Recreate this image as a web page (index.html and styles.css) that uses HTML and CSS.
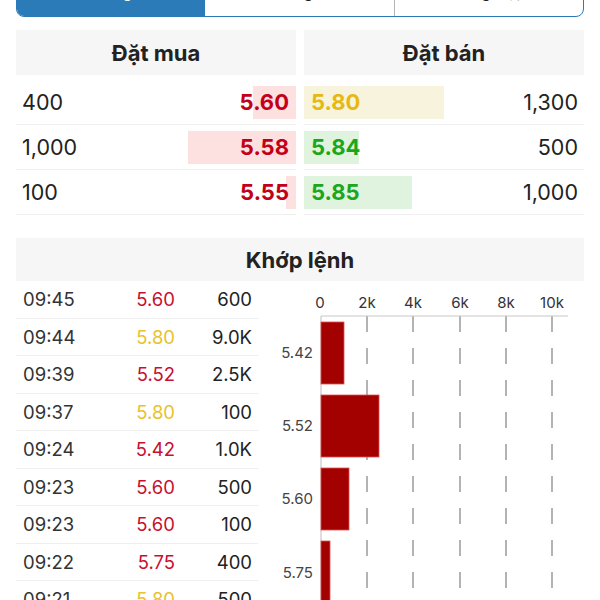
FILE: index.html
```html
<!DOCTYPE html>
<html lang="vi">
<head>
    <meta charset="UTF-8">
    <meta name="viewport" content="width=device-width, initial-scale=1.0">
    <title>Chi tiết mã</title>
    <link rel="stylesheet" href="styles.css">
</head>
<body>
    <div class="page">
        <div class="tabs">
            <div class="tab active">Bước giá</div>
            <div class="tab">Thống kê</div>
            <div class="tab">Tổng hợp</div>
        </div>

        <div class="book">
            <div class="side buy">
                <div class="head">Đặt mua</div>
                <div class="row"><span class="bar" style="width:43px"></span><span class="qty">400</span><span class="price red">5.60</span></div>
                <div class="row"><span class="bar" style="width:108px"></span><span class="qty">1,000</span><span class="price red">5.58</span></div>
                <div class="row"><span class="bar" style="width:10px"></span><span class="qty">100</span><span class="price red">5.55</span></div>
            </div>
            <div class="side sell">
                <div class="head">Đặt bán</div>
                <div class="row"><span class="bar ref" style="width:140px"></span><span class="price yellow">5.80</span><span class="qty">1,300</span></div>
                <div class="row"><span class="bar" style="width:55px"></span><span class="price green">5.84</span><span class="qty">500</span></div>
                <div class="row"><span class="bar" style="width:108px"></span><span class="price green">5.85</span><span class="qty">1,000</span></div>
            </div>
        </div>

        <div class="matched">
            <div class="head">Khớp lệnh</div>
            <div class="matched-body">
                <div class="ticks">
                    <div class="tick"><span>09:45</span><span class="p red">5.60</span><span class="v">600</span></div>
                    <div class="tick"><span>09:44</span><span class="p yellow">5.80</span><span class="v">9.0K</span></div>
                    <div class="tick"><span>09:39</span><span class="p red">5.52</span><span class="v">2.5K</span></div>
                    <div class="tick"><span>09:37</span><span class="p yellow">5.80</span><span class="v">100</span></div>
                    <div class="tick"><span>09:24</span><span class="p red">5.42</span><span class="v">1.0K</span></div>
                    <div class="tick"><span>09:23</span><span class="p red">5.60</span><span class="v">500</span></div>
                    <div class="tick"><span>09:23</span><span class="p red">5.60</span><span class="v">100</span></div>
                    <div class="tick"><span>09:22</span><span class="p red">5.75</span><span class="v">400</span></div>
                    <div class="tick"><span>09:21</span><span class="p yellow">5.80</span><span class="v">500</span></div>
                </div>
                <svg class="chart" width="326" height="340" viewBox="0 0 326 340">
                    <g class="grid">
                        <line x1="109" y1="35" x2="109" y2="340"/>
                        <line x1="155" y1="35" x2="155" y2="340"/>
                        <line x1="202" y1="35" x2="202" y2="340"/>
                        <line x1="248" y1="35" x2="248" y2="340"/>
                        <line x1="294" y1="35" x2="294" y2="340"/>
                    </g>
                    <line class="axis" x1="63" y1="35" x2="310" y2="35"/>
                    <line class="axis" x1="63" y1="35" x2="63" y2="340"/>
                    <g class="xlabels">
                        <text x="62" y="27">0</text>
                        <text x="109" y="27">2k</text>
                        <text x="155" y="27">4k</text>
                        <text x="202" y="27">6k</text>
                        <text x="248" y="27">8k</text>
                        <text x="294" y="27">10k</text>
                    </g>
                    <g class="bars">
                        <rect x="63" y="41" width="23" height="62"/>
                        <rect x="63" y="114" width="58" height="62"/>
                        <rect x="63" y="187" width="28" height="62"/>
                        <rect x="63" y="260" width="9" height="62"/>
                    </g>
                    <g class="ylabels">
                        <text x="55" y="77">5.42</text>
                        <text x="55" y="150">5.52</text>
                        <text x="55" y="223">5.60</text>
                        <text x="55" y="297">5.75</text>
                    </g>
                </svg>
            </div>
        </div>
    </div>
</body>
</html>
```

FILE: styles.css
```css
body {
    margin: 0;
    background: #fff;
    font-family: Inter, 'Noto Sans', 'Liberation Sans', sans-serif;
    color: #222;
    overflow: hidden;
}
.page {
    padding: 0 16px;
}
.tabs {
    display: flex;
    height: 36px;
    margin-top: -19px;
    border: 1.5px solid #2b7bb9;
    border-radius: 8px;
    overflow: hidden;
    box-sizing: border-box;
}
.tab {
    flex: 1;
    text-align: center;
    font-size: 17px;
    line-height: 18px;
    color: #222;
    border-left: 1px solid #b5b5b5;
}
.tab:first-child {
    border-left: none;
}
.tab.active {
    background: #2b7bb9;
    color: #fff;
}
.tab.active + .tab {
    border-left: none;
}

.book {
    display: flex;
    gap: 8px;
    margin-top: 13px;
}
.side {
    flex: 1;
}
.head {
    background: #f6f6f6;
    height: 45px;
    display: flex;
    align-items: center;
    justify-content: center;
    font-size: 22px;
    font-weight: 700;
    color: #222;
}
.side .head {
    margin-bottom: 5px;
}
.row {
    position: relative;
    height: 45px;
    box-sizing: border-box;
    border-bottom: 1px solid #efefef;
    display: flex;
    align-items: center;
    justify-content: space-between;
    font-size: 21.5px;
}
.buy .row {
    padding: 0 7px 0 6px;
}
.sell .row {
    padding: 0 6px 0 7px;
}
.bar {
    position: absolute;
    top: 6px;
    height: 33px;
}
.buy .bar {
    right: 0;
    background: #fde0e0;
}
.sell .bar {
    left: 0;
    background: #dff3df;
}
.sell .bar.ref {
    background: #f8f3dc;
}
.qty, .price {
    position: relative;
}
.qty {
    color: #222;
}
.price {
    font-weight: 700;
    font-size: 22px;
}
.red {
    color: #c20018;
}
.yellow {
    color: #e6b912;
}
.green {
    color: #1aa71a;
}

.matched {
    margin-top: 23px;
}
.matched .head {
    height: 43px;
}
.matched-body {
    display: flex;
}
.ticks {
    width: 242px;
    flex: none;
}
.tick {
    display: grid;
    grid-template-columns: 1fr 70px 77px;
    align-items: center;
    height: 37.5px;
    box-sizing: border-box;
    border-bottom: 1px solid #efefef;
    padding: 0 6px 0 7px;
    font-size: 18.5px;
    color: #333;
}
.tick .p, .tick .v {
    text-align: right;
}
.tick .v {
    color: #222;
}
.tick .p.red {
    color: #c8102e;
}
.tick .p.yellow {
    color: #e8c22e;
}

.chart {
    display: block;
    flex: none;
    font-family: Inter, 'Noto Sans', 'Liberation Sans', sans-serif;
}
.grid line {
    stroke: #9a9a9a;
    stroke-width: 1.5;
    stroke-dasharray: 16 16;
}
.axis {
    stroke: #c8c8c8;
    stroke-width: 1.2;
}
.xlabels text {
    font-size: 15px;
    fill: #333;
    text-anchor: middle;
}
.ylabels text {
    font-size: 15px;
    fill: #444;
    text-anchor: end;
}
.bars rect {
    fill: #a30000;
    stroke: #e05050;
    stroke-width: 0.8;
}
```
